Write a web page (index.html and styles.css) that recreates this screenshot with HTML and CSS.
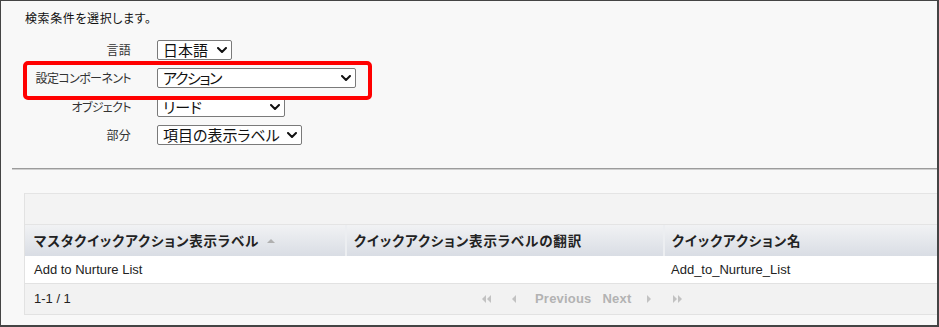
FILE: index.html
```html
<!DOCTYPE html>
<html lang="ja">
<head>
<meta charset="utf-8">
<title>検索条件</title>
<link rel="stylesheet" href="styles.css">
</head>
<body>
<div class="frame">
  <p class="title">検索条件を選択します。</p>
  <div class="form">
    <span class="lbl">言語</span>
    <div class="sel w-lang"><span>日本語</span><svg class="chev" viewBox="0 0 10 6"><path d="M1 1 L5 5 L9 1" /></svg></div>
    <span class="lbl kana">設定コンポーネント</span>
    <div class="sel w-comp"><span class="kana-sel">アクション</span><svg class="chev" viewBox="0 0 10 6"><path d="M1 1 L5 5 L9 1" /></svg></div>
    <span class="lbl kana">オブジェクト</span>
    <div class="sel w-obj"><span>リード</span><svg class="chev" viewBox="0 0 10 6"><path d="M1 1 L5 5 L9 1" /></svg></div>
    <span class="lbl">部分</span>
    <div class="sel w-part"><span>項目の表示ラベル</span><svg class="chev" viewBox="0 0 10 6"><path d="M1 1 L5 5 L9 1" /></svg></div>
  </div>
  <div class="highlight"></div>
  <div class="sep"></div>
  <div class="list">
    <div class="topbar"></div>
    <table class="grid">
      <colgroup><col class="c1"><col class="c2"><col class="c3"></colgroup>
      <thead>
        <tr>
          <th>マスタクイックアクション表示ラベル<svg class="sort" viewBox="0 0 8 4"><path d="M0 4 L4 0 L8 4 Z"/></svg></th>
          <th>クイックアクション表示ラベルの翻訳</th>
          <th>クイックアクション名</th>
        </tr>
      </thead>
      <tbody>
        <tr>
          <td>Add to Nurture List</td>
          <td></td>
          <td>Add_to_Nurture_List</td>
        </tr>
      </tbody>
    </table>
    <div class="footer">
      <span class="count">1-1 / 1</span>
      <div class="pager">
        <svg class="pg dbl" viewBox="0 0 10 8"><path d="M5 0 L1 4 L5 8 Z M10 0 L6 4 L10 8 Z"/></svg>
        <svg class="pg one prev-ico" viewBox="0 0 4 8"><path d="M4 0 L0 4 L4 8 Z"/></svg>
        <span class="pg-txt prev">Previous</span>
        <span class="pg-txt next">Next</span>
        <svg class="pg one next-ico" viewBox="0 0 4 8"><path d="M0 0 L4 4 L0 8 Z"/></svg>
        <svg class="pg dbl last" viewBox="0 0 10 8"><path d="M0 0 L4 4 L0 8 Z M5 0 L9 4 L5 8 Z"/></svg>
      </div>
    </div>
  </div>
</div>
</body>
</html>
```

FILE: styles.css
```css
* { box-sizing: border-box; }
html, body { margin: 0; padding: 0; background: #f8f8f8; }
.frame {
  position: relative;
  width: 939px;
  height: 327px;
  overflow: hidden;
  background: #f8f8f8;
  border-top: 1px solid #444;
  border-left: 1px solid #444;
  border-right: 2px solid #444;
  border-bottom: 2px solid #444;
  font-family: "Noto Sans CJK JP", "Liberation Sans", sans-serif;
  font-feature-settings: "palt";
  color: #222;
}
.title {
  margin: 0;
  padding: 9px 0 0 24px;
  font-size: 12px;
  line-height: 16px;
  letter-spacing: 0.6px;
  color: #111;
}
.form {
  display: grid;
  grid-template-columns: 130px max-content;
  column-gap: 26px;
  row-gap: 8.3px;
  margin-top: 14px;
  align-items: center;
}
.lbl {
  text-align: right;
  font-size: 12px;
  line-height: 16px;
  color: #333;
  letter-spacing: 0.3px;
}
.lbl.kana { letter-spacing: -0.6px; }
.sel {
  height: 20px;
  border: 1px solid #7a7a7a;
  border-radius: 2px;
  background: #fff;
  padding: 0 4px 0 5px;
  display: flex;
  align-items: center;
  justify-content: space-between;
  font-size: 15px;
  line-height: 18px;
  color: #111;
}
.kana-sel { letter-spacing: -1.4px; }
.w-lang { width: 75px; }
.w-comp { width: 199px; }
.w-obj { width: 128px; }
.w-part { width: 145px; }
.chev {
  width: 10px;
  height: 6px;
  flex: none;
}
.chev path {
  fill: none;
  stroke: #111;
  stroke-width: 2;
  stroke-linecap: round;
  stroke-linejoin: round;
}
.highlight {
  position: absolute;
  left: 22px;
  top: 60px;
  width: 349px;
  height: 39px;
  border: 4px solid #ff0000;
  border-radius: 5px;
}
.sep {
  margin: 23px 0 0 11px;
  height: 2px;
  border-top: 1px solid #9c9c9c;
  border-bottom: 1px solid #cfcfcf;
}
.list {
  margin: 23px 0 0 23px;
  border-left: 1px solid #e2e2e2;
}
.topbar {
  height: 32px;
  background: #f3f3f3;
  border-top: 1px solid #e4e4e4;
  border-bottom: 1px solid #e4e4e4;
}
.grid {
  width: 100%;
  border-collapse: collapse;
  table-layout: fixed;
}
.c1 { width: 321px; }
.c2 { width: 318px; }
.grid th {
  height: 31px;
  padding: 0 0 0 9px;
  text-align: left;
  font-size: 13.5px;
  font-weight: bold;
  letter-spacing: 0.85px;
  color: #222;
  background: linear-gradient(#f1f2f4, #d9dde4);
  white-space: nowrap;
}
.grid th + th { border-left: 2px solid #eceef1; padding-left: 7px; }
.sort {
  width: 8px;
  height: 4px;
  margin-left: 8px;
  vertical-align: 3px;
}
.sort path { fill: #b0b0b0; }
.grid td {
  height: 27px;
  padding: 0 0 0 9px;
  background: #fff;
  font-family: "Liberation Sans", Arial, sans-serif;
  font-size: 13px;
  color: #222;
  white-space: nowrap;
}
.grid td:nth-child(3) { padding-left: 7px; }
.footer {
  height: 32px;
  display: flex;
  align-items: center;
  background: #f2f2f2;
  border-top: 1px solid #e2e2e2;
  border-bottom: 1px solid #e2e2e2;
  font-family: "Liberation Sans", Arial, sans-serif;
}
.count {
  width: 456px;
  padding-left: 9px;
  font-size: 13px;
  color: #222;
}
.pager {
  display: flex;
  align-items: center;
}
.pg path { fill: #c2c2c2; }
.dbl { width: 10px; height: 8px; }
.one { width: 4px; height: 8px; }
.prev-ico { margin-left: 21px; }
.pg-txt {
  font-size: 13px;
  font-weight: bold;
  color: #b3b3b3;
  letter-spacing: 0.2px;
}
.prev { margin-left: 19px; }
.next { margin-left: 11px; }
.next-ico { margin-left: 15px; }
.last { margin-left: 22px; }
```
